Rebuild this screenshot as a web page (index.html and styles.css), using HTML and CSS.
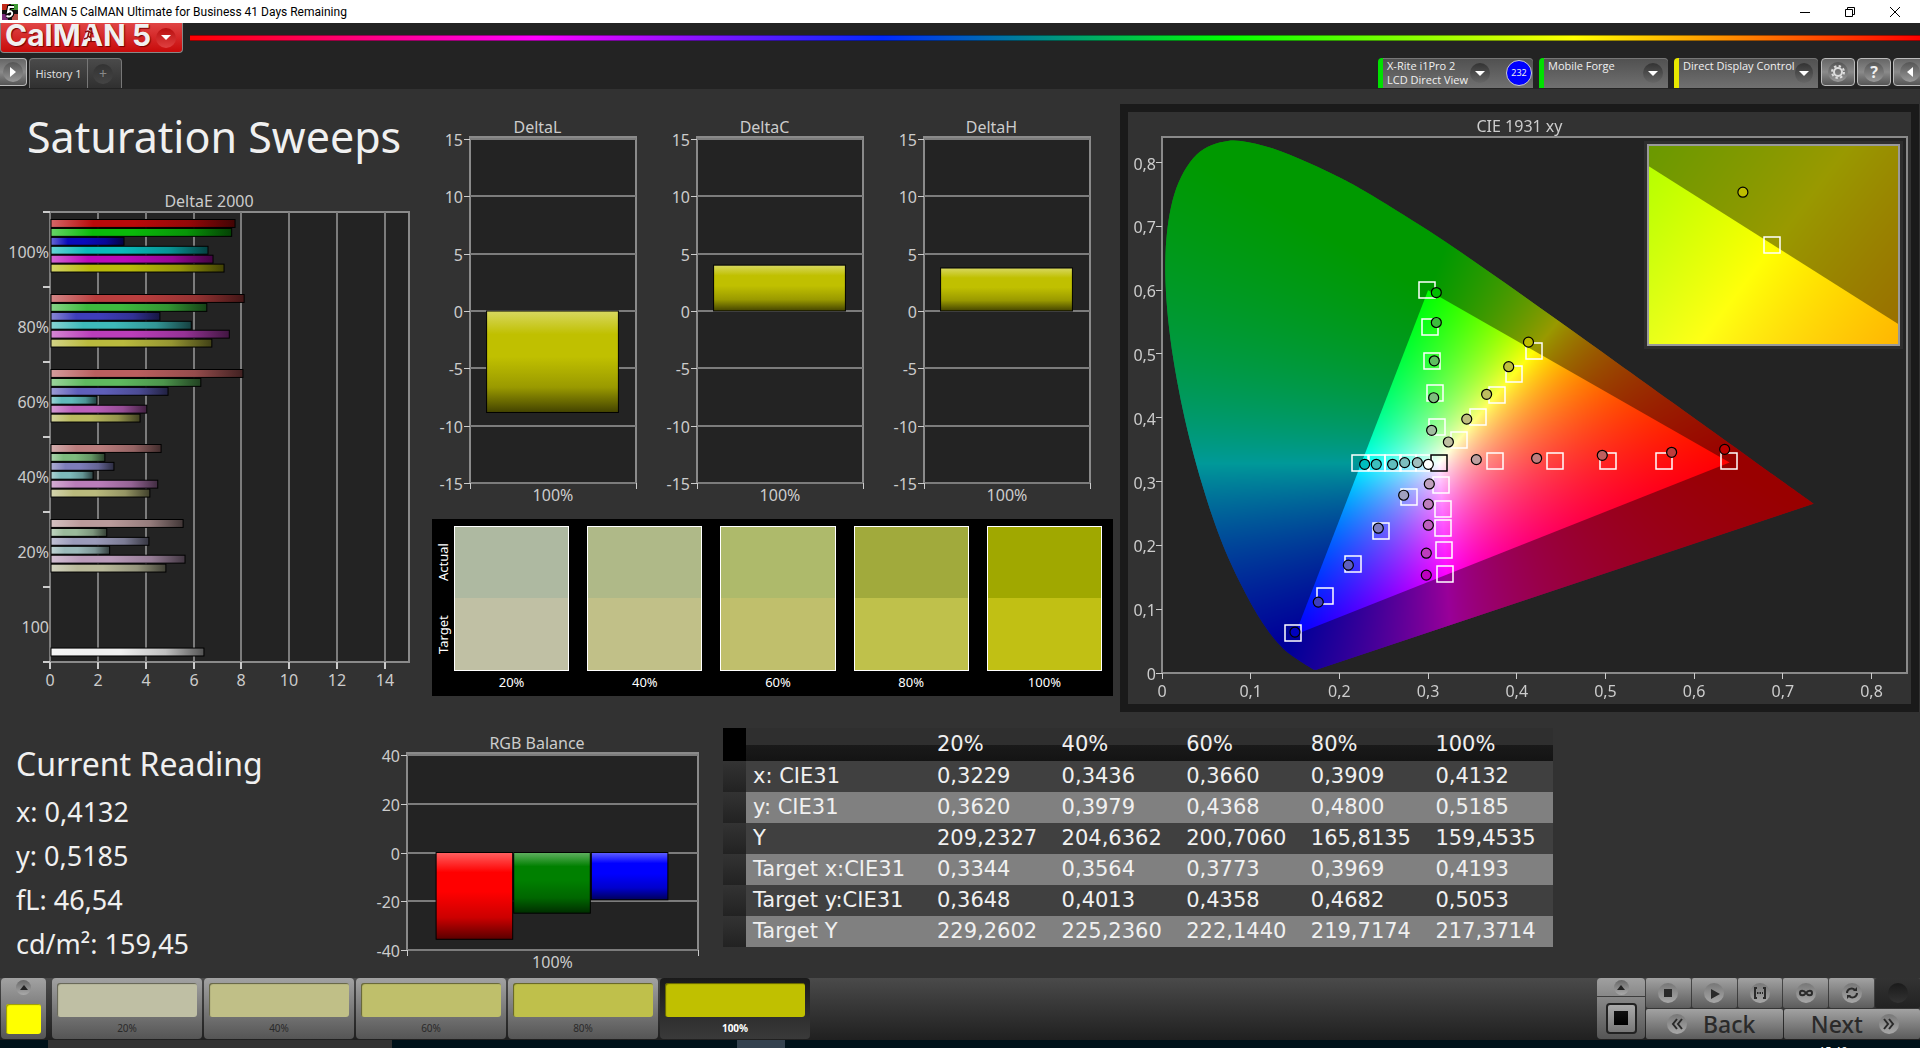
FILE: index.html
```html
<!DOCTYPE html>
<html lang="en">
<head>
    <meta charset="UTF-8">
    <meta name="viewport" content="width=device-width, initial-scale=1.0">
    <title>CalMAN 5 CalMAN Ultimate for Business 41 Days Remaining</title>
    <link rel="stylesheet" href="styles.css">
</head>
<body>
  <div class="titlebar">
    <svg class="app-icon" width="16" height="16" viewBox="0 0 16 16">
      <rect width="16" height="16" fill="#111"/>
      <rect width="7" height="6" fill="#c22a1a"/><rect x="9" width="7" height="6" fill="#3f9a35"/>
      <rect y="10" width="6" height="6" fill="#7a2a7a"/><rect x="10" y="10" width="6" height="6" fill="#b8504a"/>
      <path d="M12 3H7L6 8c3-1.500 5 0 4 2.500-.7 2-3 2.500-5.500 1.500" fill="none" stroke="#000" stroke-width="4"/>
      <path d="M12 3H7L6 8c3-1.500 5 0 4 2.500-.7 2-3 2.500-5.500 1.500" fill="none" stroke="#fff" stroke-width="2"/>
    </svg>
    <span class="titlebar-text">CalMAN 5 CalMAN Ultimate for Business 41 Days Remaining</span>
    <div class="win-buttons">
      <button aria-label="Minimize"><svg width="12" height="12" viewBox="0 0 12 12"><path d="M1 6.500h10" stroke="#000"/></svg></button>
      <button aria-label="Restore"><svg width="12" height="12" viewBox="0 0 12 12" fill="none" stroke="#000"><path d="M1.500 3.500h7v7h-7zM3.500 3.500v-2h7v7h-2"/></svg></button>
      <button aria-label="Close"><svg width="12" height="12" viewBox="0 0 12 12"><path d="M1 1l10 10M11 1L1 11" stroke="#000"/></svg></button>
    </div>
  </div>

  <header>
    <button class="logo">
      <span class="logo-name">CalMAN</span><span class="logo-five">5</span>
      <svg class="runner" width="12" height="14" viewBox="0 0 12 14" fill="none" stroke="#8a1010" stroke-width="1.500">
        <circle cx="7.500" cy="2" r="1" fill="#8a1010"/><path d="M2 5l3-1 2 1 3 2M6 5L5 9l3 2v3M5 9l-1 2-3 1"/>
      </svg>
      <span class="knob knob-red"><i class="caret"></i></span>
    </button>
    <div class="rainbow"></div>
  </header>

  <nav>
    <button class="square-btn left-btn" aria-label="Expand"><span class="knob"><svg width="8" height="12" viewBox="0 0 8 12"><path d="M1 1l6 5-6 5z" fill="#fff"/></svg></span></button>
    <div class="history">
      <button class="history-tab">History 1</button>
      <button class="history-add" aria-label="Add tab"><span class="knob knob-dark">+</span></button>
    </div>
    <div class="devices">
      <button class="device green meter"><span class="device-name">X-Rite i1Pro 2<br>LCD Direct View</span><span class="knob knob-dark"><i class="caret"></i></span><span class="meter-count">232</span></button>
      <button class="device green source"><span class="device-name">Mobile Forge</span><span class="knob knob-dark"><i class="caret"></i></span></button>
      <button class="device yellow display"><span class="device-name">Direct Display Control</span><span class="knob knob-dark"><i class="caret"></i></span></button>
    </div>
    <div class="tools">
      <button class="square-btn" aria-label="Settings"><span class="knob"><svg width="14" height="14" viewBox="0 0 14 14" fill="none" stroke="#ddd"><circle cx="7" cy="7" r="4" stroke-width="2"/><circle cx="7" cy="7" r="6" stroke-width="2" stroke-dasharray="2.400 2.300"/></svg></span></button>
      <button class="square-btn" aria-label="Help"><span class="knob knob-text">?</span></button>
      <button class="square-btn" aria-label="Collapse"><span class="knob"><svg width="8" height="12" viewBox="0 0 8 12"><path d="M7 1L1 6l6 5z" fill="#fff"/></svg></span></button>
    </div>
  </nav>

  <main>
    <section class="top-row">
      <div class="sweeps">
        <h1>Saturation Sweeps</h1>
        <svg class="chart" id="deltaE"></svg>
      </div>

      <div class="middle">
        <div class="deltas">
          <svg class="chart" id="deltaL"></svg>
          <svg class="chart" id="deltaC"></svg>
          <svg class="chart" id="deltaH"></svg>
        </div>
        <div class="swatches">
          <div class="swatch-side"><span>Target</span><span>Actual</span></div>
          <div class="swatch s20"><div class="box"></div>20%</div>
          <div class="swatch s40"><div class="box"></div>40%</div>
          <div class="swatch s60"><div class="box"></div>60%</div>
          <div class="swatch s80"><div class="box"></div>80%</div>
          <div class="swatch s100"><div class="box"></div>100%</div>
        </div>
      </div>

      <div class="cie-panel">
        <div class="cie">
          <canvas id="gamut"></canvas>
          <svg class="chart" id="ciePoints"></svg>
        </div>
      </div>
    </section>

    <section class="bottom-row">
      <div class="reading">
        <h2>Current Reading</h2>
        <p>x: 0,4132</p>
        <p>y: 0,5185</p>
        <p>fL: 46,54</p>
        <p>cd/m²: 159,45</p>
      </div>
      <svg class="chart" id="rgb"></svg>
      <table>
        <thead>
          <tr><th class="grip"></th><th class="label"></th><th>20%</th><th>40%</th><th>60%</th><th>80%</th><th>100%</th></tr>
        </thead>
        <tbody>
          <tr><td class="grip"></td><td>x: CIE31</td><td>0,3229</td><td>0,3436</td><td>0,3660</td><td>0,3909</td><td>0,4132</td></tr>
          <tr><td class="grip"></td><td>y: CIE31</td><td>0,3620</td><td>0,3979</td><td>0,4368</td><td>0,4800</td><td>0,5185</td></tr>
          <tr><td class="grip"></td><td>Y</td><td>209,2327</td><td>204,6362</td><td>200,7060</td><td>165,8135</td><td>159,4535</td></tr>
          <tr><td class="grip"></td><td>Target x:CIE31</td><td>0,3344</td><td>0,3564</td><td>0,3773</td><td>0,3969</td><td>0,4193</td></tr>
          <tr><td class="grip"></td><td>Target y:CIE31</td><td>0,3648</td><td>0,4013</td><td>0,4358</td><td>0,4682</td><td>0,5053</td></tr>
          <tr><td class="grip"></td><td>Target Y</td><td>229,2602</td><td>225,2360</td><td>222,1440</td><td>219,7174</td><td>217,3714</td></tr>
        </tbody>
      </table>
    </section>
  </main>

  <footer>
    <button class="current" aria-label="Current colour"><span class="dot"><svg width="8" height="5" viewBox="0 0 8 5"><path d="M0 5l4-5 4 5z" fill="#222"/></svg></span><span class="current-color"></span></button>
    <div class="steps">
      <button class="step s20"><span class="step-color"></span>20%</button>
      <button class="step s40"><span class="step-color"></span>40%</button>
      <button class="step s60"><span class="step-color"></span>60%</button>
      <button class="step s80"><span class="step-color"></span>80%</button>
      <button class="step s100 active"><span class="step-color"></span>100%</button>
    </div>
    <div class="controls">
      <div class="window-size">
        <button aria-label="Show patterns"><span class="dot"><svg width="8" height="5" viewBox="0 0 8 5"><path d="M0 5l4-5 4 5z" fill="#222"/></svg></span></button>
        <button aria-label="Pattern window"><span class="pattern"></span></button>
      </div>
      <div class="transport">
        <div class="transport-row">
          <button aria-label="Stop"><span class="disc"><svg width="16" height="16" viewBox="0 0 16 16"><path d="M4 4h8v8H4z" fill="#2a2a2a"/></svg></span></button>
          <button aria-label="Play"><span class="disc"><svg width="16" height="16" viewBox="0 0 16 16"><path d="M5 4l9 5-9 5z" fill="#2a2a2a"/></svg></span></button>
          <button aria-label="Read series"><span class="disc"><svg width="16" height="16" viewBox="0 0 16 16" fill="none" stroke="#2a2a2a" stroke-width="2"><path d="M5 3H3v10h2M11 3h2v10h-2"/><path d="M5 8h6" stroke-dasharray="1.500 1"/></svg></span></button>
          <button aria-label="Continuous"><span class="disc"><svg width="16" height="16" viewBox="0 0 16 16" fill="none" stroke="#2a2a2a" stroke-width="2"><path d="M8 8C6 5 2 5 2 8s4 3 6 0 6-3 6 0-4 3-6 0z"/></svg></span></button>
          <button aria-label="Repeat"><span class="disc"><svg width="16" height="16" viewBox="0 0 16 16" fill="none" stroke="#2a2a2a" stroke-width="2"><path d="M3 8c0-4 5-6 8-3M13 8c0 4-5 6-8 3"/><path d="M13 2v4H9zM3 14v-4h4z" fill="#2a2a2a" stroke="none"/></svg></span></button>
          <button class="off" aria-label="Record"><span class="disc"></span></button>
        </div>
        <div class="transport-row big">
          <button><span class="disc"><svg width="16" height="16" viewBox="0 0 16 16" fill="none" stroke="#2a2a2a" stroke-width="2"><path d="M8 3L4 8l4 5M13 3L9 8l4 5"/></svg></span>Back</button>
          <button>Next<span class="disc"><svg width="16" height="16" viewBox="0 0 16 16" fill="none" stroke="#2a2a2a" stroke-width="2"><path d="M3 3l4 5-4 5M8 3l4 5-4 5"/></svg></span></button>
        </div>
      </div>
    </div>
  </footer>
  <div class="taskbar"><span class="task"></span><span class="task-active"></span><span class="clock">15:46</span></div>

  <script src="charts.js"></script>
</body>
</html>
```
FILE: styles.css
```css
* {
    margin: 0;
    box-sizing: border-box;
}

body {
    display: flex;
    flex-direction: column;
    height: 100vh;
    overflow: hidden;
    background-color: #232323;
    color: #f0f0f0;
    font-family: "Noto Sans", "Open Sans", sans-serif;
    font-size: 16px;
}

button {
    padding: 0;
    border: none;
    background: none;
    color: inherit;
    font-family: inherit;
    font-size: 12px;
    cursor: pointer;
}

/* window title */
.titlebar {
    display: flex;
    align-items: center;
    gap: 5px;
    height: 23px;
    padding: 0 3px 0 2px;
    background-color: #fff;
    color: #000;
}
.titlebar-text {
    font-family: Roboto, "Open Sans", sans-serif;
    font-size: 12px;
}
.win-buttons {
    display: flex;
    margin-left: auto;
}
.win-buttons button {
    display: flex;
    align-items: center;
    justify-content: center;
    width: 45px;
    height: 20px;
}

/* logo and rainbow line */
header {
    display: flex;
    gap: 7px;
    height: 35px;
}
.logo {
    position: relative;
    display: flex;
    align-items: center;
    width: 183px;
    height: 30px;
    padding-left: 4px;
    border: 1px solid #888;
    border-top: none;
    border-radius: 0 0 4px 4px;
    background: linear-gradient(#e04545, #c80a0a);
    font-family: Inter, sans-serif;
    font-size: 30px;
    font-weight: 700;
    line-height: 28px;
    text-shadow: 1px 1px 1px #700;
}
.logo-name, .logo-five {
    margin-top: -5px;
}
.logo-five {
    margin-left: 6px;
}
.runner {
    position: absolute;
    left: 82px;
    top: 4px;
}
.logo .knob {
    margin-left: auto;
    margin-right: 6px;
}
.rainbow {
    flex: 1;
    height: 6px;
    margin-top: 12px;
    border: 1px solid rgba(0, 0, 0, 0.4);
    border-width: 1px 0;
    background: linear-gradient(to right, #f00, #f0f 20%, #0028ff 40%, #0f0 60%, #ff0 80%, #f00);
}

.knob {
    display: flex;
    align-items: center;
    justify-content: center;
    width: 20px;
    height: 20px;
    border-radius: 50%;
    background: linear-gradient(#555, #999);
}
.knob-dark {
    background: linear-gradient(#333, #666);
}
.knob-red {
    background: linear-gradient(#b81010, #e04040);
}
.knob-text {
    font-size: 16px;
    font-weight: 700;
}
.caret {
    border: 5px solid transparent;
    border-top-color: #fff;
    border-bottom: none;
}

/* tab bar */
nav {
    display: flex;
    height: 31px;
}
.square-btn {
    display: flex;
    align-items: center;
    justify-content: center;
    width: 34px;
    height: 28px;
    border: 1px solid #bbb;
    border-radius: 4px;
    background: linear-gradient(#666, #8a8a8a 50%, #555);
}
.left-btn {
    width: 27px;
    border-left: none;
    border-radius: 0 4px 4px 0;
}
.history {
    display: flex;
    height: 30px;
    margin-left: 2px;
    border: 1px solid #777;
    border-bottom: none;
    border-radius: 4px 4px 0 0;
    background: linear-gradient(#4a4a4a, #303030);
}
.history-tab {
    width: 58px;
    border-right: 1px solid #777;
    color: #ddd;
    font-size: 11px;
}
.history-add {
    width: 33px;
    padding-left: 5px;
}
.history-add .knob {
    background: linear-gradient(#333, #444);
    color: #888;
    font-size: 14px;
}
.devices {
    display: flex;
    gap: 6px;
    margin-left: auto;
}
.device {
    display: flex;
    align-items: center;
    justify-content: space-between;
    height: 30px;
    padding-right: 5px;
    border-left: 5px solid #00e000;
    border-radius: 4px 4px 0 0;
    background: linear-gradient(#505050, #707070);
    box-shadow: inset 0 1px #777;
}
.device.yellow {
    border-left-color: #e8e800;
}
.device-name {
    align-self: flex-start;
    padding: 1px 0 0 4px;
    font-family: "Open Sans", sans-serif;
    font-size: 11px;
    line-height: 14px;
    text-align: left;
    white-space: nowrap;
}
.meter {
    width: 155px;
    padding-right: 1px;
}
.source {
    width: 129px;
}
.display {
    width: 144px;
}
.meter .knob {
    margin-left: auto;
}
.meter-count {
    width: 26px;
    height: 26px;
    margin-left: 16px;
    border: 1px solid #ccc;
    border-radius: 50%;
    background-color: #00f;
    font-size: 9px;
    line-height: 24px;
}
.tools {
    display: flex;
    gap: 2px;
    margin: 0 -7px 0 3px;
}

/* workspace */
main {
    flex: 1;
    display: grid;
    grid-template-rows: minmax(0, 608fr) minmax(0, 266fr);
    min-height: 0;
    padding-top: 15px;
    background-color: #323232;
}
.top-row {
    display: grid;
    grid-template-columns: 424fr 696fr 800fr;
}
.bottom-row {
    display: grid;
    grid-template-columns: 370fr 353fr 830fr 367fr;
    padding-top: 16px;
}
.chart {
    display: block;
    width: 100%;
    height: 100%;
    min-height: 0;
}
.chart text {
    fill: #ccc;
    font-size: 16px;
}
.sweeps, .middle {
    display: flex;
    flex-direction: column;
    min-height: 0;
}
h1 {
    margin-bottom: 20px;
    padding-left: 27px;
    font-size: 43px;
    font-weight: 400;
    line-height: 66px;
}
.deltas {
    flex: 1;
    display: grid;
    grid-template-columns: 1fr 1fr 1fr;
    min-height: 0;
    padding-right: 15px;
}
.swatches {
    display: flex;
    gap: 18px;
    height: 177px;
    margin: 0 7px 16px 8px;
    padding: 7px 11px 0 0;
    background-color: #000;
}
.swatch-side {
    display: flex;
    height: 145px;
    width: 22px;
    margin-right: -18px;
    color: #fff;
    font-size: 13px;
    line-height: 22px;
    writing-mode: vertical-rl;
    transform: rotate(180deg);
}
.swatch-side span {
    flex: 1;
    text-align: center;
}
.swatch {
    flex: 1;
    font-size: 13px;
    line-height: 22px;
    text-align: center;
    color: #fff;
}
.box {
    height: 145px;
    border: 1px solid #fff;
}
.s20 .box { background: linear-gradient(#aeb9a1 50%, #c0c0a4 50%); }
.s40 .box { background: linear-gradient(#afb988 50%, #c1c088 50%); }
.s60 .box { background: linear-gradient(#aeba6b 50%, #c0bf6c 50%); }
.s80 .box { background: linear-gradient(#a1aa3c 50%, #bfc14b 50%); }
.s100 .box { background: linear-gradient(#a0a800 50%, #c1c014 50%); }

.cie-panel {
    display: flex;
    min-height: 0;
    margin-right: 1px;
    border: 8px solid #1a1a1a;
}
.cie {
    position: relative;
    flex: 1;
}
.cie canvas, .cie svg {
    position: absolute;
    left: 0;
    top: 0;
    width: 100%;
    height: 100%;
}

/* readings */
.reading {
    padding: 14px 0 0 16px;
}
h2 {
    margin-bottom: 4px;
    font-size: 32px;
    font-weight: 400;
    line-height: 44px;
}
.reading p {
    font-size: 27px;
    line-height: 44px;
}
table {
    align-self: start;
    width: 100%;
    border-collapse: collapse;
    table-layout: fixed;
    font-family: "DejaVu Sans", sans-serif;
    font-size: 21px;
}
th, td {
    height: 31px;
    padding: 0 0 0 7px;
    font-weight: 400;
    line-height: 31px;
    text-align: left;
    white-space: nowrap;
}
th {
    height: 33px;
    background: linear-gradient(#2f2f2f 50%, #1a1a1a 50%, #141414);
}
.label {
    width: 184px;
}
tbody tr {
    background-color: #404040;
}
tbody tr:nth-child(even) {
    background-color: #808080;
}
.grip {
    width: 23px;
    background: linear-gradient(#333, #222);
}
th.grip {
    background: #000;
}

/* bottom bar */
footer {
    display: flex;
    align-items: flex-start;
    height: 62px;
    padding-left: 1px;
    background: linear-gradient(#4a4a4a, #202020);
}
.current, .step {
    display: flex;
    flex-direction: column;
    align-items: center;
    height: 61px;
    border-radius: 4px;
    background: linear-gradient(#a2a2a2, #555);
}
.current {
    justify-content: space-between;
    width: 45px;
    padding: 2px 0 5px;
}
.dot {
    display: flex;
    align-items: center;
    justify-content: center;
    width: 15px;
    height: 15px;
    border-radius: 50%;
    background: linear-gradient(#666, #aaa);
}
.current-color {
    width: 35px;
    height: 30px;
    border-radius: 3px;
    background-color: #ff0;
    box-shadow: inset 1px 1px 1px #990;
}
.steps {
    display: flex;
    gap: 2px;
    margin-left: 6px;
}
.step {
    width: 150px;
    padding: 5px 5px 0;
    color: #2a2a2a;
    font-size: 10px;
    line-height: 22px;
}
.step-color {
    width: 100%;
    height: 36px;
    border-radius: 3px;
    box-shadow: inset 1px 1px 1px rgba(0, 0, 0, 0.5);
}
.step.active {
    background: linear-gradient(#1a1a1a, #3a3a3a);
    color: #fff;
    font-weight: 700;
}
.s20 .step-color { background-color: #bfbfa4; }
.s40 .step-color { background-color: #c0bf87; }
.s60 .step-color { background-color: #bfbf6b; }
.s80 .step-color { background-color: #bfc04b; }
.s100 .step-color { background-color: #c0c000; }
.controls {
    display: flex;
    gap: 1px;
    margin-left: auto;
}
.window-size {
    display: flex;
    flex-direction: column;
    gap: 1px;
    width: 48px;
}
.window-size button {
    display: flex;
    align-items: center;
    justify-content: center;
    height: 18px;
    border-radius: 4px 4px 0 0;
    background: linear-gradient(#a0a0a0, #888);
}
.window-size button:last-child {
    height: 42px;
    border-radius: 0 0 4px 4px;
    background: linear-gradient(#888, #555);
}
.pattern {
    width: 31px;
    height: 31px;
    border: 2px solid #222;
    border-radius: 4px;
    background: linear-gradient(#111, #000) center / 14px 14px no-repeat, linear-gradient(#aaa, #777);
}
.transport {
    display: flex;
    flex-direction: column;
    gap: 1px;
    width: 274px;
}
.transport-row {
    display: flex;
    gap: 1px;
    height: 30px;
}
.transport-row button {
    flex: 1;
    display: flex;
    align-items: center;
    justify-content: center;
    border-radius: 2px;
    background: linear-gradient(#a2a2a2, #5c5c5c);
}
.transport-row .off {
    background: linear-gradient(#333, #222);
}
.disc {
    display: flex;
    align-items: center;
    justify-content: center;
    width: 20px;
    height: 20px;
    border-radius: 50%;
    background: linear-gradient(#777, #a8a8a8);
}
.off .disc {
    background: linear-gradient(#1a1a1a, #333);
}
.transport-row.big button {
    gap: 16px;
    padding-right: 6px;
    color: #2a2a2a;
    font-size: 23px;
    line-height: 28px;
    font-weight: 500;
}
.transport-row.big button:last-child {
    padding: 0 0 0 6px;
}

.taskbar {
    display: flex;
    height: 8px;
    overflow: hidden;
    background-color: #00121a;
}
.task {
    width: 344px;
    margin-left: 48px;
    background-color: #333;
}
.task-active {
    width: 48px;
    margin-left: 345px;
    background-color: #34424f;
}
.clock {
    margin: 3px 73px 0 auto;
    color: #fff;
    font-size: 11px;
    line-height: 15px;
}
```
FILE: charts.js
```js
const NS = 'http://www.w3.org/2000/svg';
let gradientCount = 0;

function add(parent, tag, attrs, text) {
    const el = document.createElementNS(NS, tag);
    for (const key in attrs) el.setAttribute(key, attrs[key]);
    if (text !== undefined) el.textContent = text;
    parent.appendChild(el);
    return el;
}

function mix(c, target, amount) {
    return 'rgb(' + c.map(v => Math.round(v + (target - v) * amount)).join(',') + ')';
}

// plot area in pixels from the svg size and its margins
function plotArea(svg, m) {
    const w = svg.clientWidth, h = svg.clientHeight;
    return { w, h, left: m.l, top: m.t, right: w - m.r, bottom: h - m.b };
}

function line(svg, x1, y1, x2, y2, color, width) {
    add(svg, 'line', { x1, y1, x2, y2, stroke: color, 'stroke-width': width, 'shape-rendering': 'crispEdges' });
}

function frame(svg, p, fill) {
    add(svg, 'rect', { x: p.left, y: p.top, width: p.right - p.left, height: p.bottom - p.top, fill, stroke: '#8a8a8a', 'stroke-width': 2, 'shape-rendering': 'crispEdges' });
}

function bar(svg, x, y, width, height, color, vertical) {
    const id = 'g' + gradientCount++;
    const g = add(svg, 'linearGradient', { id, x1: 0, y1: 0, x2: vertical ? 0 : 1, y2: vertical ? 1 : 0 });
    add(g, 'stop', { offset: 0, 'stop-color': mix(color, 255, 0.38) });
    add(g, 'stop', { offset: 0.23, 'stop-color': mix(color, 0, 0) });
    add(g, 'stop', { offset: 0.45, 'stop-color': mix(color, 0, 0) });
    add(g, 'stop', { offset: 0.75, 'stop-color': mix(color, 0, 0.2) });
    add(g, 'stop', { offset: 1, 'stop-color': mix(color, 0, 0.65) });
    add(svg, 'rect', { x, y, width, height, fill: 'url(#' + id + ')', stroke: '#000' });
}

// one group per saturation level: red, green, blue, cyan, magenta, yellow
const groups = [
    { label: '100%', low: 10, values: [7.69, 7.55, 3.05, 6.56, 6.77, 7.23] },
    { label: '80%', low: 62, values: [8.07, 6.51, 4.55, 5.86, 7.45, 6.72] },
    { label: '60%', low: 95, values: [8.02, 6.26, 4.89, 1.92, 4.0, 3.72] },
    { label: '40%', low: 125, values: [4.6, 2.25, 2.63, 1.76, 4.46, 4.13] },
    { label: '20%', low: 155, values: [5.52, 2.33, 4.09, 2.45, 5.6, 4.8] },
    { label: '100', values: [] }
];
const masks = [[1, 0, 0], [0, 1, 0], [0, 0, 1], [0, 1, 1], [1, 0, 1], [1, 1, 0]];

function drawDeltaE() {
    const svg = document.getElementById('deltaE');
    svg.innerHTML = '';
    const p = plotArea(svg, { l: 50, t: 22, r: 15, b: 50 });
    const unit = (p.right - p.left) / 15;
    const band = (p.bottom - p.top) / groups.length;
    add(svg, 'text', { x: p.w / 2 - 3, y: p.top - 5, 'text-anchor': 'middle' }, 'DeltaE 2000');
    frame(svg, p, '#232323');
    for (let v = 0; v <= 14; v += 2) {
        const x = Math.round(p.left + v * unit);
        line(svg, x, p.top, x, p.bottom, '#7c7c7c', 2);
        line(svg, x, p.bottom, x, p.bottom + 7, '#ccc', 2);
        add(svg, 'text', { x, y: p.bottom + 24, 'text-anchor': 'middle' }, v);
    }
    for (let i = 0; i <= groups.length; i++) {
        const y = Math.round(p.top + i * band);
        line(svg, p.left - 7, y, p.left, y, '#ccc', 2);
    }
    const step = band * 0.119;
    groups.forEach((group, i) => {
        const top = p.top + i * band;
        group.values.forEach((v, j) => {
            const color = masks[j].map(on => on ? 186 : group.low);
            bar(svg, p.left + 1, top + band * 0.1 + j * step, v * unit, step - 1, color, false);
        });
        add(svg, 'text', { x: p.left - 1, y: top + band / 2 + 8, 'text-anchor': 'end' }, group.label);
    });
    bar(svg, p.left + 1, p.top + 5 * band + band * 0.1 + 6 * step, 6.39 * unit, step - 1, [240, 240, 240], false);
}

// bars that rise or fall from a zero line
function drawVertical(id, title, max, step, bars, m) {
    const svg = document.getElementById(id);
    svg.innerHTML = '';
    const p = plotArea(svg, m);
    const unit = (p.bottom - p.top - 2) / (2 * max);
    const zero = p.top + 2 + max * unit;
    const width = p.right - p.left;
    const middle = (p.left + p.right) / 2;
    add(svg, 'text', { x: (p.w - (m.extra || 0)) / 2, y: p.top - 4, 'text-anchor': 'middle' }, title);
    frame(svg, p, '#232323');
    for (let v = -max; v <= max; v += step) {
        const y = Math.round(zero - v * unit);
        line(svg, p.left, y, p.right, y, '#7c7c7c', 2);
        line(svg, p.left - 6, y, p.left, y, '#ccc', 1);
        add(svg, 'text', { x: p.left - 7, y: y + 7, 'text-anchor': 'end' }, v);
    }
    line(svg, p.left, p.bottom, p.left, p.bottom + 6, '#ccc', 1);
    line(svg, p.right, p.bottom, p.right, p.bottom + 6, '#ccc', 1);
    add(svg, 'text', { x: middle, y: p.bottom + 18, 'text-anchor': 'middle' }, '100%');
    const w = width * 0.8 / bars.length;
    bars.forEach((b, i) => {
        const h = Math.abs(b.value) * unit;
        bar(svg, p.left + width * 0.1 + i * w, b.value > 0 ? zero - h : zero, w - 1, h, b.color, true);
    });
}

// spectral locus, CIE 1931 2 degree observer
const locus = [
    [.1741, .0050], [.1714, .0051], [.1689, .0069], [.1644, .0109], [.1566, .0177], [.1440, .0297],
    [.1355, .0399], [.1241, .0578], [.1096, .0868], [.0913, .1327], [.0687, .2007], [.0454, .2950],
    [.0235, .4127], [.0082, .5384], [.0039, .6548], [.0139, .7502], [.0389, .8120], [.0743, .8338],
    [.1142, .8262], [.1547, .8059], [.1929, .7816], [.2296, .7543], [.3016, .6923], [.3731, .6245],
    [.4441, .5547], [.5125, .4866], [.5752, .4242], [.6270, .3725], [.6658, .3340], [.6915, .3083],
    [.7190, .2809], [.7347, .2653]
];
const primaries = [[.64, .33], [.3, .6], [.15, .06]];

const targets = [
    [.2984, .6010], [.3022, .5430], [.3040, .4893], [.3074, .4382], [.3097, .3850],
    [.4193, .5053], [.3969, .4682], [.3773, .4358], [.3564, .4013], [.3344, .3648],
    [.6392, .3318], [.5663, .3318], [.5032, .3318], [.4434, .3318], [.3758, .3318],
    [.3194, .1549], [.3179, .1925], [.3164, .2269], [.3164, .2577], [.3145, .2942],
    [.1482, .0626], [.1838, .1210], [.2157, .1716], [.2473, .2222], [.2788, .2754],
    [.2236, .3297], [.2424, .3297], [.2600, .3297], [.2770, .3297], [.2950, .3297]
];
// measured points, 100% down to 20% for each colour
const measured = [
    { mask: [0, 1, 0], points: [[.3093, .5962], [.3093, .5493], [.3070, .4893], [.3063, .4314], [.3040, .3803]] },
    { mask: [1, 1, 0], points: [[.4132, .5185], [.3909, .4800], [.3660, .4368], [.3436, .3979], [.3229, .3620]] },
    { mask: [1, 0, 0], points: [[.6344, .3505], [.5746, .3459], [.4964, .3412], [.4224, .3365], [.3544, .3344]] },
    { mask: [1, 0, 1], points: [[.2980, .1534], [.2980, .1878], [.3003, .2316], [.3003, .2645], [.3014, .2963]] },
    { mask: [0, 0, 1], points: [[.1499, .0642], [.1762, .1111], [.2101, .1690], [.2439, .2269], [.2725, .2786]] },
    { mask: [0, 1, 1], points: [[.2285, .3271], [.2416, .3271], [.2600, .3271], [.2736, .3297], [.2879, .3297]] }
];
const lows = [0, 60, 95, 125, 160];

function xyToRgb(x, y) {
    const X = x / y, Z = (1 - x - y) / y;
    let c = [
        3.2406 * X - 1.5372 - 0.4986 * Z,
        -0.9689 * X + 1.8758 + 0.0415 * Z,
        0.0557 * X - 0.2040 + 1.0570 * Z
    ].map(v => Math.max(0, v));
    const max = Math.max(...c);
    return c.map(v => v / max * 255);
}

// smooth curve through the locus points
function traceLocus(ctx, toX, toY) {
    const at = i => locus[Math.min(Math.max(i, 0), locus.length - 1)];
    ctx.beginPath();
    ctx.moveTo(toX(locus[0][0]), toY(locus[0][1]));
    for (let i = 0; i < locus.length - 1; i++) {
        const a = at(i - 1), b = at(i), c = at(i + 1), d = at(i + 2);
        ctx.bezierCurveTo(
            toX(b[0] + (c[0] - a[0]) / 6), toY(b[1] + (c[1] - a[1]) / 6),
            toX(c[0] - (d[0] - b[0]) / 6), toY(c[1] - (d[1] - b[1]) / 6),
            toX(c[0]), toY(c[1])
        );
    }
    ctx.closePath();
}

// fill a rectangle of the canvas with the colours of the xy range behind it
function paintGamut(ctx, box, range) {
    const w = Math.round(box.w), h = Math.round(box.h);
    const toX = x => box.x + (x - range.x) / range.size * w;
    const toY = y => box.y + h - (y - range.y) / range.size * h;
    const off = document.createElement('canvas');
    off.width = w;
    off.height = h;
    const octx = off.getContext('2d');
    const img = octx.createImageData(w, h);
    for (let j = 0; j < h; j++) {
        for (let i = 0; i < w; i++) {
            const x = range.x + (i + 0.5) / w * range.size;
            const y = range.y + (h - j - 0.5) / h * range.size;
            const rgb = xyToRgb(x, y);
            const k = (j * w + i) * 4;
            img.data[k] = rgb[0];
            img.data[k + 1] = rgb[1];
            img.data[k + 2] = rgb[2];
            img.data[k + 3] = 255;
        }
    }
    octx.putImageData(img, 0, 0);

    ctx.save();
    ctx.beginPath();
    ctx.rect(box.x, box.y, w, h);
    ctx.clip();
    traceLocus(ctx, toX, toY);
    ctx.clip();
    ctx.drawImage(off, box.x, box.y);
    ctx.fillStyle = 'rgba(0,0,0,0.4)';
    ctx.fillRect(box.x, box.y, w, h);
    ctx.beginPath();
    primaries.forEach(c => ctx.lineTo(toX(c[0]), toY(c[1])));
    ctx.closePath();
    ctx.clip();
    ctx.drawImage(off, box.x, box.y);
    ctx.restore();
}

function square(svg, x, y, color) {
    add(svg, 'rect', { x: Math.round(x) - 8, y: Math.round(y) - 8, width: 16, height: 16, fill: 'none', stroke: color, 'stroke-width': 1.5 });
}

function dot(svg, x, y, fill) {
    add(svg, 'circle', { cx: x, cy: y, r: 5, fill, stroke: '#000', 'stroke-width': 1.2 });
}

function drawCie() {
    const svg = document.getElementById('ciePoints');
    const canvas = document.getElementById('gamut');
    svg.innerHTML = '';
    const p = plotArea(svg, { l: 34, t: 25, r: 4, b: 31 });
    const pw = p.right - p.left, ph = p.bottom - p.top;
    const toX = x => p.left + x / 0.84 * pw;
    const toY = y => p.bottom - y / 0.84 * ph;

    canvas.width = p.w;
    canvas.height = p.h;
    const ctx = canvas.getContext('2d');
    ctx.fillStyle = '#232323';
    ctx.fillRect(p.left, p.top, pw, ph);
    paintGamut(ctx, { x: p.left, y: p.top, w: pw, h: ph }, { x: 0, y: 0, size: 0.84 });

    add(svg, 'text', { x: p.w / 2, y: p.top - 5, 'text-anchor': 'middle' }, 'CIE 1931 xy');
    frame(svg, p, 'none');
    for (let i = 0; i <= 8; i++) {
        const label = i ? '0,' + i : '0';
        const x = toX(i / 10), y = toY(i / 10);
        line(svg, x, p.bottom, x, p.bottom + 6, '#ccc', 1);
        line(svg, p.left - 6, y, p.left, y, '#ccc', 1);
        add(svg, 'text', { x, y: p.bottom + 24, 'text-anchor': 'middle' }, label);
        add(svg, 'text', { x: p.left - 6, y: y + 7, 'text-anchor': 'end' }, label);
    }

    targets.forEach(t => square(svg, toX(t[0]), toY(t[1]), '#fff'));
    square(svg, toX(.3127), toY(.329), '#000');
    measured.forEach(m => m.points.forEach((t, i) => {
        dot(svg, toX(t[0]), toY(t[1]), 'rgb(' + m.mask.map(on => on ? 190 : lows[i]).join(',') + ')');
    }));
    dot(svg, toX(.3003), toY(.3271), '#fff');

    // magnified view around the current target
    const inset = { x: p.right - 259, y: p.top + 8, w: 251, h: 200 };
    ctx.fillStyle = '#2e2e2e';
    ctx.fillRect(inset.x - 4, inset.y - 4, inset.w + 8, inset.h + 8);
    paintGamut(ctx, inset, { x: .3943, y: .4803, size: .05 });
    add(svg, 'rect', { x: inset.x, y: inset.y, width: inset.w, height: inset.h, fill: 'none', stroke: '#999', 'stroke-width': 2 });
    square(svg, inset.x + inset.w / 2 - 2, inset.y + inset.h / 2, '#fff');
    dot(svg, inset.x + (.4132 - .3943) / .05 * inset.w, inset.y + inset.h - (.5185 - .4803) / .05 * inset.h, '#bebe00');
}

function drawAll() {
    const yellow = [192, 192, 0];
    const m = { l: 46, t: 33, r: 15, b: 36 };
    drawDeltaE();
    drawVertical('deltaL', 'DeltaL', 15, 5, [{ value: -8.85, color: yellow }], m);
    drawVertical('deltaC', 'DeltaC', 15, 5, [{ value: 4, color: yellow }], m);
    drawVertical('deltaH', 'DeltaH', 15, 5, [{ value: 3.75, color: yellow }], m);
    drawVertical('rgb', 'RGB Balance', 40, 20, [
        { value: -35.6, color: [255, 0, 0] },
        { value: -24.9, color: [0, 128, 0] },
        { value: -19.4, color: [0, 0, 255] }
    ], { l: 37, t: 25, r: 25, b: 28, extra: 19 });
    drawCie();
}

window.addEventListener('resize', drawAll);
drawAll();
```
